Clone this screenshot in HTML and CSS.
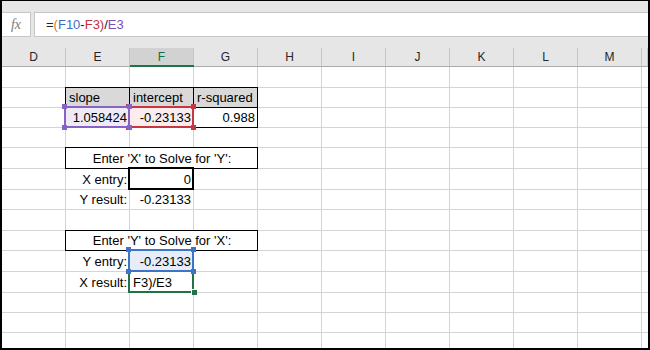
FILE: index.html
```html
<!DOCTYPE html>
<html lang="en">
<head>
  <meta charset="UTF-8">
  <meta name="viewport" content="width=device-width, initial-scale=1.0">
  <title>Regression solver</title>
  <link rel="stylesheet" href="styles.css">
</head>
<body>
  <div class="window">
    <div class="toolbar">
      <div class="fx">fx</div>
      <div class="formula">=<span class="paren-open">(</span><span class="ref-blue">F10</span>-<span class="ref-red">F3</span><span class="paren-close">)</span>/<span class="ref-purple">E3</span></div>
    </div>

    <div class="sheet">
      <div class="row head">
        <div class="col-head">D</div>
        <div class="col-head">E</div>
        <div class="col-head active">F</div>
        <div class="col-head">G</div>
        <div class="col-head">H</div>
        <div class="col-head">I</div>
        <div class="col-head">J</div>
        <div class="col-head">K</div>
        <div class="col-head">L</div>
        <div class="col-head">M</div>
        <div class="col-head"></div>
      </div>

      <!-- row 1 -->
      <div class="row tall"></div>

      <!-- row 2: headings -->
      <div class="row">
        <div class="cell col-e heading boxed">slope</div>
        <div class="cell col-f heading boxed">intercept</div>
        <div class="cell col-g heading boxed">r-squared</div>
      </div>

      <!-- row 3: values -->
      <div class="row">
        <div class="cell col-e num boxed sel sel-purple">1.058424
          <span class="handle tl"></span><span class="handle tr"></span>
          <span class="handle bl"></span><span class="handle br"></span>
        </div>
        <div class="cell col-f num boxed sel sel-red">-0.23133
          <span class="handle tl"></span><span class="handle tr"></span>
          <span class="handle bl"></span><span class="handle br"></span>
        </div>
        <div class="cell col-g num boxed">0.988</div>
      </div>

      <!-- row 4 -->
      <div class="row"></div>

      <!-- rows 5-7: solve for Y -->
      <div class="row tall">
        <div class="cell span-3 merged boxed">Enter 'X' to Solve for 'Y':</div>
      </div>
      <div class="row tall">
        <div class="cell col-e num">X entry:</div>
        <div class="cell col-f num thick">0</div>
      </div>
      <div class="row">
        <div class="cell col-e num">Y result:</div>
        <div class="cell col-f num">-0.23133</div>
      </div>

      <!-- row 8 -->
      <div class="row tall"></div>

      <!-- rows 9-11: solve for X -->
      <div class="row">
        <div class="cell span-3 merged boxed">Enter 'Y' to Solve for 'X':</div>
      </div>
      <div class="row tall">
        <div class="cell col-e num">Y entry:</div>
        <div class="cell col-f num sel sel-blue">-0.23133
          <span class="handle tl"></span><span class="handle tr"></span>
          <span class="handle bl"></span><span class="handle br"></span>
        </div>
      </div>
      <div class="row tall">
        <div class="cell col-e num">X result:</div>
        <div class="cell col-f sel sel-green">F3)/E3<span class="fill-handle"></span></div>
      </div>

      <div class="row"></div>
      <div class="row"></div>
      <div class="row last"></div>
    </div>
  </div>
</body>
</html>
```

FILE: styles.css
```css
* {
  box-sizing: border-box;
}
body {
  margin: 0;
  font-family: "Liberation Sans", Arial, sans-serif;
}
.window {
  width: 650px;
  height: 350px;
  border: 2px solid #000;
  border-top-width: 1px;
  background-color: #e6e6e6;
  display: flex;
  flex-direction: column;
  overflow: hidden;
}

/* formula bar */
.toolbar {
  height: 47px;
  padding-top: 11px;
  display: flex;
  align-items: flex-start;
  gap: 3px;
}
.fx {
  width: 29px;
  height: 25px;
  background-color: #fff;
  border: 1px solid #c6c6c6;
  border-left: none;
  display: flex;
  align-items: center;
  justify-content: center;
  font-family: "Liberation Serif", serif;
  font-style: italic;
  font-size: 14px;
  color: #7b7b7b;
}
.formula {
  flex: 1;
  height: 25px;
  background-color: #fff;
  border: 1px solid #c6c6c6;
  border-right: none;
  padding-left: 11px;
  display: flex;
  align-items: center;
  font-size: 13px;
  color: #222;
}
.paren-open { color: #d07c2c; }
.paren-close { color: #b03a52; }
.ref-blue { color: #3b70c4; }
.ref-red { color: #c8303c; }
.ref-purple { color: #7b4fb8; }

/* sheet grid */
.sheet {
  flex: 1;
  display: flex;
  flex-direction: column;
  background-color: #fff;
  background-image: repeating-linear-gradient(to right, transparent 0 63px, #d4d4d4 63px 64px);
}
.row {
  display: grid;
  grid-template-columns: repeat(10, 64px) 1fr;
  height: 20px;
  flex-shrink: 0;
  border-bottom: 1px solid #d4d4d4;
}
.row.tall {
  height: 21px;
}
.row.last {
  flex: 1;
  border-bottom: none;
}
.row.head {
  height: 19px;
  background-color: #e6e6e6;
  border-bottom-color: #ababab;
}
.col-head {
  position: relative;
  display: flex;
  align-items: center;
  justify-content: center;
  border-right: 1px solid #c6c6c6;
  font-size: 12px;
  color: #262626;
}
.col-head.active {
  background-color: #d2d2d2;
  color: #1d6a3f;
}
.col-head.active::after {
  content: "";
  position: absolute;
  left: 0;
  right: -1px;
  bottom: -1px;
  height: 2px;
  background-color: #217346;
}

/* cells */
.cell {
  position: relative;
  display: flex;
  align-items: center;
  padding: 0 3px;
  white-space: nowrap;
  font-size: 13px;
  color: #000;
}
.col-e { grid-column: 2; }
.col-f { grid-column: 3; }
.col-g { grid-column: 4; }
.span-3 {
  grid-column: 2 / span 3;
  justify-content: center;
}
.num {
  justify-content: flex-end;
}
.heading {
  background-color: #d9d9d9;
}
.merged {
  background-color: #fff;
}
.boxed::before {
  content: "";
  position: absolute;
  top: -1px;
  left: -1px;
  right: 0;
  bottom: -1px;
  border: 1px solid #000;
}
.thick::before {
  content: "";
  position: absolute;
  top: -2px;
  left: -2px;
  right: 0;
  bottom: -1px;
  border: 2px solid #000;
}

/* formula reference highlights */
.sel {
  z-index: 2;
}
.sel::after {
  content: "";
  position: absolute;
  top: -2px;
  left: -2px;
  right: 0;
  bottom: -1px;
  border: 2px solid var(--sel);
}
.sel-purple {
  --sel: #8763c6;
  background-color: #efebf6;
  z-index: 3;
}
.sel-red {
  --sel: #c8363f;
  background-color: #fbeced;
}
.sel-blue {
  --sel: #3d74c6;
  background-color: #e6edf8;
  z-index: 3;
}
.sel-green {
  --sel: #217346;
}
.handle {
  position: absolute;
  width: 5px;
  height: 5px;
  background-color: var(--sel);
  z-index: 1;
}
.handle.tl { top: -4px; left: -4px; }
.handle.tr { top: -4px; right: -2px; }
.handle.bl { bottom: -3px; left: -4px; }
.handle.br { bottom: -3px; right: -2px; }
.fill-handle {
  position: absolute;
  right: -3px;
  bottom: -3px;
  width: 6px;
  height: 6px;
  background-color: #217346;
  border-top: 1px solid #fff;
  border-left: 1px solid #fff;
  z-index: 1;
}
```
